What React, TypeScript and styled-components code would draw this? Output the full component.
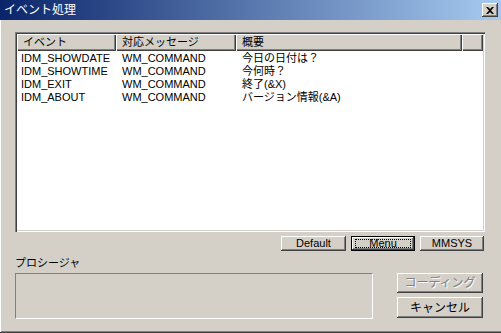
import styled, { createGlobalStyle } from "styled-components";

const GlobalStyle = createGlobalStyle`
  html, body {
    margin: 0;
    padding: 0;
    background: #d4d0c8;
  }
  * {
    box-sizing: border-box;
  }
`;

const font = `"Liberation Sans", "Noto Sans CJK JP", Arial, sans-serif`;

const Window = styled.div`
  width: 501px;
  height: 333px;
  background: #d4d0c8;
  font-family: ${font};
  font-size: 11px;
  color: #000;
  display: flex;
  flex-direction: column;
  border-bottom: 1px solid #404040;
  box-shadow: inset 1px 0 #ffffff, inset 0 -1px #808080;
  overflow: hidden;
`;

const TitleBar = styled.div`
  height: 20px;
  flex: none;
  display: flex;
  align-items: center;
  padding: 0 3px 0 4px;
  background: linear-gradient(to right, #0a246a, #a6caf0);
  color: #fff;
  font-size: 12px;
`;

const Title = styled.span`
  flex: 1;
  line-height: 20px;
`;

const CloseBtn = styled.div`
  width: 16px;
  height: 14px;
  background: #d4d0c8;
  box-shadow: inset -1px -1px #404040, inset 1px 1px #ffffff,
    inset -2px -2px #808080;
  display: flex;
  align-items: center;
  justify-content: center;
`;

const Body = styled.div`
  flex: 1;
  display: flex;
  flex-direction: column;
  padding: 12px 16px 0 15px;
`;

const ListView = styled.div`
  height: 200px;
  background: #fff;
  box-shadow: inset 1px 1px #808080, inset 2px 2px #404040,
    inset -1px -1px #ffffff, inset -2px -2px #d4d0c8;
  padding: 2px;
  display: flex;
  flex-direction: column;
`;

const HeaderRow = styled.div`
  display: flex;
  height: 17px;
  flex: none;
  margin-bottom: 1px;
`;

const HeaderCell = styled.div<{ $w?: number }>`
  ${(p) => (p.$w ? `width: ${p.$w}px; flex: none;` : "flex: 1;")}
  background: #d4d0c8;
  box-shadow: inset 1px 1px #ffffff, inset -1px -1px #404040,
    inset -2px -2px #808080;
  padding: 0 6px;
  line-height: 17px;
  white-space: nowrap;
`;

const Row = styled.div`
  display: flex;
  height: 13px;
`;

const Cell = styled.div<{ $w?: number }>`
  ${(p) => (p.$w ? `width: ${p.$w}px; flex: none;` : "flex: 1;")}
  padding: 0 0 0 4px;
  line-height: 13px;
  white-space: nowrap;
`;

const ButtonRow = styled.div`
  display: flex;
  justify-content: flex-end;
  gap: 5px;
  margin-top: 4px;
  padding-right: 1px;
`;

const Button = styled.div<{ $w: number; $h: number; $focus?: boolean; $disabled?: boolean }>`
  width: ${(p) => p.$w}px;
  height: ${(p) => p.$h}px;
  background: #d4d0c8;
  display: flex;
  align-items: center;
  justify-content: center;
  position: relative;
  line-height: 1;
  font-size: ${(p) => (p.$h > 16 ? 12 : 11)}px;
  color: ${(p) => (p.$disabled ? "#808080" : "#000")};
  text-shadow: ${(p) => (p.$disabled ? "1px 1px #ffffff" : "none")};
  box-shadow: ${(p) =>
    p.$focus
      ? "inset 0 0 0 1px #000, inset -2px -2px #404040, inset 2px 2px #ffffff, inset -3px -3px #808080"
      : "inset -1px -1px #404040, inset 1px 1px #ffffff, inset -2px -2px #808080"};
`;

const FocusRing = styled.span`
  position: absolute;
  inset: 3px 4px 3px 4px;
  border: 1px dotted #000;
`;

const Label = styled.div`
  margin-top: 4px;
  height: 18px;
  line-height: 14px;
  padding-top: 1px;
`;

const Bottom = styled.div`
  display: flex;
  align-items: flex-start;
`;

const ProcBox = styled.div`
  width: 358px;
  height: 46px;
  border-top: 1px solid #808080;
  border-left: 1px solid #808080;
  border-bottom: 1px solid #ffffff;
  border-right: 1px solid #ffffff;
`;

const SideButtons = styled.div`
  margin-left: auto;
  padding-right: 2px;
  display: flex;
  flex-direction: column;
  gap: 4px;
`;

const rows = [
  ["IDM_SHOWDATE", "WM_COMMAND", "今日の日付は？"],
  ["IDM_SHOWTIME", "WM_COMMAND", "今何時？"],
  ["IDM_EXIT", "WM_COMMAND", "終了(&X)"],
  ["IDM_ABOUT", "WM_COMMAND", "バージョン情報(&A)"],
];

export default function App() {
  return (
    <>
      <GlobalStyle />
      <Window>
        <TitleBar>
          <Title>イベント処理</Title>
          <CloseBtn>
            <svg width="8" height="7" viewBox="0 0 8 7">
              <path d="M0 0h2l2 2 2-2h2L5 3.5 8 7H6L4 5 2 7H0l3-3.5z" fill="#000" />
            </svg>
          </CloseBtn>
        </TitleBar>
        <Body>
          <ListView>
            <HeaderRow>
              <HeaderCell $w={99}>イベント</HeaderCell>
              <HeaderCell $w={120}>対応メッセージ</HeaderCell>
              <HeaderCell $w={226}>概要</HeaderCell>
              <HeaderCell />
            </HeaderRow>
            {rows.map((r) => (
              <Row key={r[0]}>
                <Cell $w={101}>{r[0]}</Cell>
                <Cell $w={120}>{r[1]}</Cell>
                <Cell>{r[2]}</Cell>
              </Row>
            ))}
          </ListView>
          <ButtonRow>
            <Button $w={65} $h={15}>Default</Button>
            <Button $w={64} $h={15} $focus>
              <FocusRing />
              Menu
            </Button>
            <Button $w={64} $h={15}>MMSYS</Button>
          </ButtonRow>
          <Label>プロシージャ</Label>
          <Bottom>
            <ProcBox />
            <SideButtons>
              <Button $w={86} $h={20} $disabled>コーディング</Button>
              <Button $w={86} $h={21}>キャンセル</Button>
            </SideButtons>
          </Bottom>
        </Body>
      </Window>
    </>
  );
}
